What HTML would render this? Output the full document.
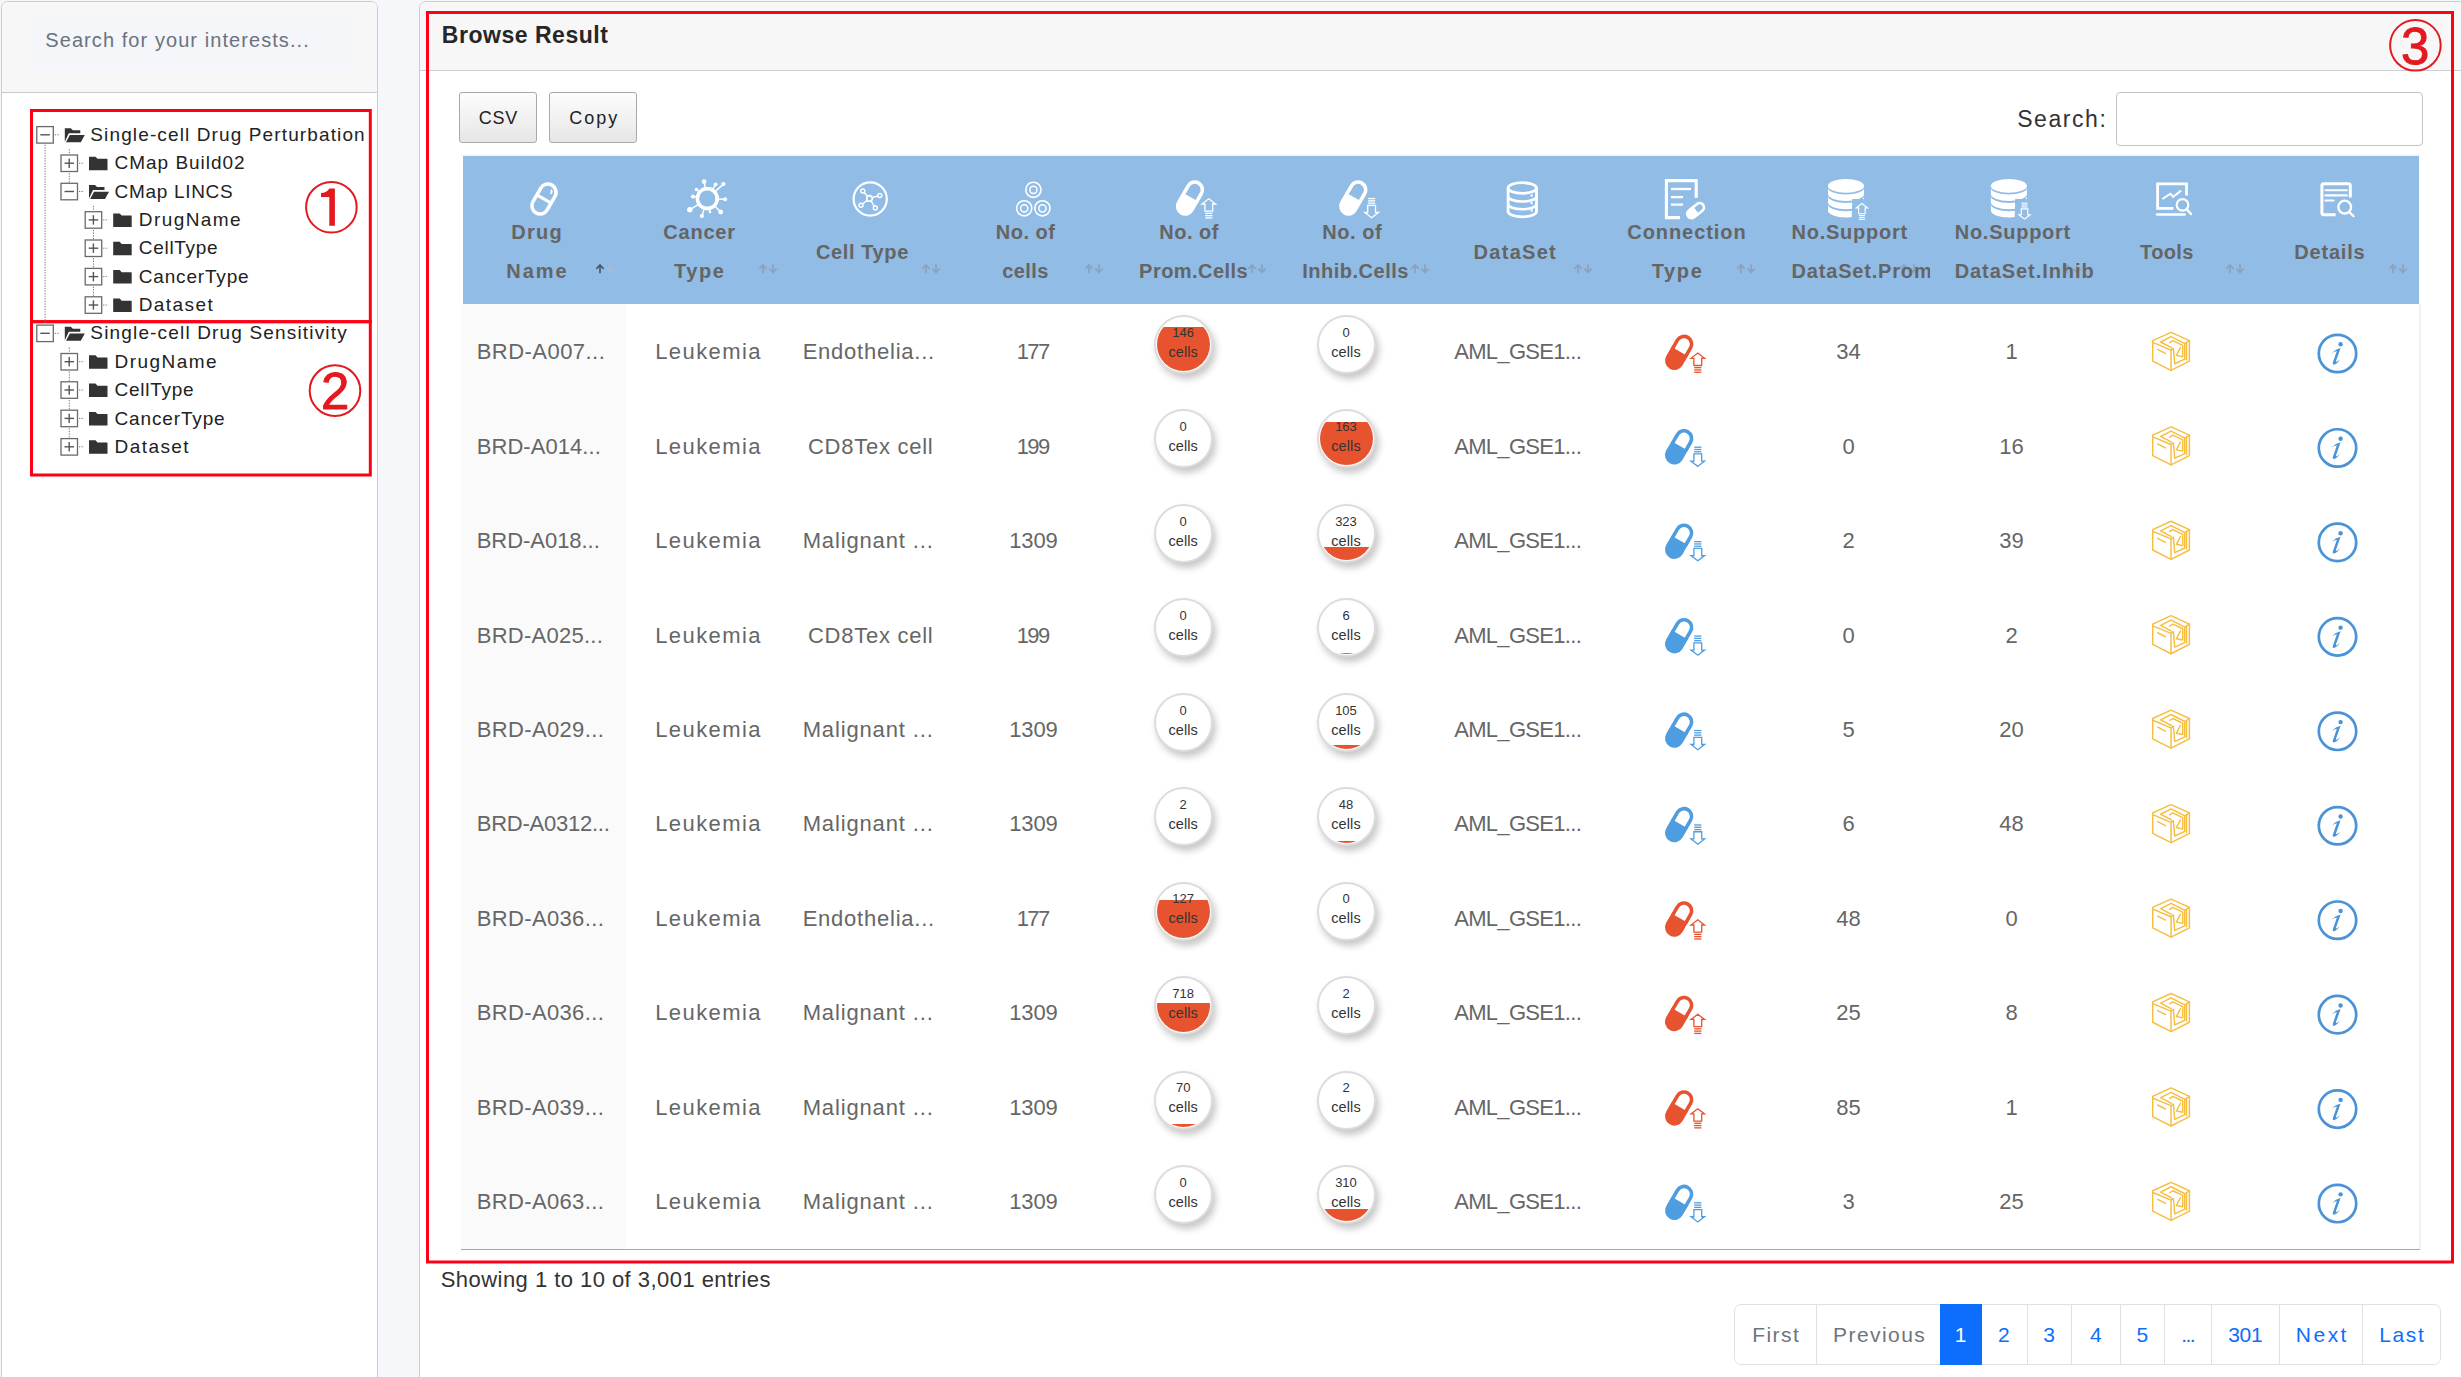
<!DOCTYPE html><html><head><meta charset="utf-8"><style>
html,body{margin:0;padding:0;}
body{width:2461px;height:1377px;overflow:hidden;position:relative;background:#f6f7fa;font-family:"Liberation Sans", sans-serif;}
.a{position:absolute;}
.t{position:absolute;white-space:pre;line-height:1;font-family:"Liberation Sans", sans-serif;}
.circ{position:absolute;width:55px;height:55px;border-radius:50%;border:2px solid #dcdcdc;background:#fff;box-shadow:3px 5px 7px rgba(0,0,0,0.22);}
.inner{position:absolute;left:1px;top:1px;width:53px;height:53px;border-radius:50%;overflow:hidden;}
.fill{position:absolute;left:0;right:0;bottom:0;background:#e8532f;}
</style></head><body>

<div class="a" style="left:1px;top:1px;width:375px;height:1420px;border:1px solid #c9ccd0;border-radius:7px;background:#fff;overflow:hidden"><div class="a" style="left:0;top:0;right:0;height:90px;background:#f7f7f7;border-bottom:1px solid #c9cccf"></div><div class="a" style="left:29px;top:12.5px;width:324px;height:54px;background:#f4f6f9;border-radius:5px"></div></div>
<div class="a" style="left:419px;top:1px;width:2045px;height:1420px;border:1px solid #c9ccd0;border-radius:7px;background:#fff;overflow:hidden"><div class="a" style="left:0;top:0;right:0;height:68px;background:#f7f7f7;border-bottom:1px solid #cfcfcf"></div></div>
<div class="a" style="left:459px;top:92px;width:76px;height:49px;border:1px solid #a9a9a9;border-radius:3px;background:linear-gradient(#fdfdfd,#e6e6e6)"></div>
<div class="a" style="left:549px;top:92px;width:86px;height:49px;border:1px solid #a9a9a9;border-radius:3px;background:linear-gradient(#fdfdfd,#e6e6e6)"></div>
<div class="a" style="left:2116px;top:92px;width:305px;height:52px;border:1px solid #c4c4c4;border-radius:4px;background:#fff"></div>
<div class="a" style="left:461px;top:154px;width:1960px;height:2px;background:#f6f7f8"></div>
<div class="a" style="left:463px;top:156px;width:1956px;height:148px;background:#91bce6"></div>
<div class="a" style="left:461px;top:304px;width:165px;height:945px;background:#fafafa"></div>
<div class="a" style="left:2419px;top:304px;width:2px;height:945px;background:#f1f2f3"></div>
<div class="a" style="left:461px;top:1248.5px;width:1959px;height:1.6px;background:#a8a8a8"></div>
<div class="a" style="left:1734px;top:1304px;width:705px;height:59px;border:1px solid #dee2e6;border-radius:7px;background:#fff"></div>
<div class="a" style="left:1815.5px;top:1305px;width:1px;height:59px;background:#dee2e6"></div>
<div class="a" style="left:2026.5px;top:1305px;width:1px;height:59px;background:#dee2e6"></div>
<div class="a" style="left:2071.4px;top:1305px;width:1px;height:59px;background:#dee2e6"></div>
<div class="a" style="left:2119.6px;top:1305px;width:1px;height:59px;background:#dee2e6"></div>
<div class="a" style="left:2164.4px;top:1305px;width:1px;height:59px;background:#dee2e6"></div>
<div class="a" style="left:2211.4px;top:1305px;width:1px;height:59px;background:#dee2e6"></div>
<div class="a" style="left:2278.6px;top:1305px;width:1px;height:59px;background:#dee2e6"></div>
<div class="a" style="left:2362.3px;top:1305px;width:1px;height:59px;background:#dee2e6"></div>
<div class="a" style="left:1940px;top:1304px;width:42px;height:61px;background:#0d6efd"></div>
<svg class="a" style="left:0;top:0;pointer-events:none" width="2461" height="1377" viewBox="0 0 2461 1377">
<path d="M600,273.2 L600,265.8 M596.4,268.8 L600,264.90000000000003 L603.6,268.8" fill="none" stroke="#4f5964" stroke-width="1.7"/>
<path d="M610,264.3 L610,271.7 M606.4,268.7 L610,272.59999999999997 L613.6,268.7" fill="none" stroke="#a4bcd6" stroke-width="1.7"/>
<path d="M763,273.2 L763,265.8 M759.4,268.8 L763,264.90000000000003 L766.6,268.8" fill="none" stroke="#8aa2bd" stroke-width="1.7"/>
<path d="M773,264.3 L773,271.7 M769.4,268.7 L773,272.59999999999997 L776.6,268.7" fill="none" stroke="#8aa2bd" stroke-width="1.7"/>
<path d="M926,273.2 L926,265.8 M922.4,268.8 L926,264.90000000000003 L929.6,268.8" fill="none" stroke="#8aa2bd" stroke-width="1.7"/>
<path d="M936,264.3 L936,271.7 M932.4,268.7 L936,272.59999999999997 L939.6,268.7" fill="none" stroke="#8aa2bd" stroke-width="1.7"/>
<path d="M1089,273.2 L1089,265.8 M1085.4,268.8 L1089,264.90000000000003 L1092.6,268.8" fill="none" stroke="#8aa2bd" stroke-width="1.7"/>
<path d="M1099,264.3 L1099,271.7 M1095.4,268.7 L1099,272.59999999999997 L1102.6,268.7" fill="none" stroke="#8aa2bd" stroke-width="1.7"/>
<path d="M1252,273.2 L1252,265.8 M1248.4,268.8 L1252,264.90000000000003 L1255.6,268.8" fill="none" stroke="#8aa2bd" stroke-width="1.7"/>
<path d="M1262,264.3 L1262,271.7 M1258.4,268.7 L1262,272.59999999999997 L1265.6,268.7" fill="none" stroke="#8aa2bd" stroke-width="1.7"/>
<path d="M1415,273.2 L1415,265.8 M1411.4,268.8 L1415,264.90000000000003 L1418.6,268.8" fill="none" stroke="#8aa2bd" stroke-width="1.7"/>
<path d="M1425,264.3 L1425,271.7 M1421.4,268.7 L1425,272.59999999999997 L1428.6,268.7" fill="none" stroke="#8aa2bd" stroke-width="1.7"/>
<path d="M1578,273.2 L1578,265.8 M1574.4,268.8 L1578,264.90000000000003 L1581.6,268.8" fill="none" stroke="#8aa2bd" stroke-width="1.7"/>
<path d="M1588,264.3 L1588,271.7 M1584.4,268.7 L1588,272.59999999999997 L1591.6,268.7" fill="none" stroke="#8aa2bd" stroke-width="1.7"/>
<path d="M1741,273.2 L1741,265.8 M1737.4,268.8 L1741,264.90000000000003 L1744.6,268.8" fill="none" stroke="#8aa2bd" stroke-width="1.7"/>
<path d="M1751,264.3 L1751,271.7 M1747.4,268.7 L1751,272.59999999999997 L1754.6,268.7" fill="none" stroke="#8aa2bd" stroke-width="1.7"/>
<path d="M1904,273.2 L1904,265.8 M1900.4,268.8 L1904,264.90000000000003 L1907.6,268.8" fill="none" stroke="#8aa2bd" stroke-width="1.7"/>
<path d="M1914,264.3 L1914,271.7 M1910.4,268.7 L1914,272.59999999999997 L1917.6,268.7" fill="none" stroke="#8aa2bd" stroke-width="1.7"/>
<path d="M2067,273.2 L2067,265.8 M2063.4,268.8 L2067,264.90000000000003 L2070.6,268.8" fill="none" stroke="#8aa2bd" stroke-width="1.7"/>
<path d="M2077,264.3 L2077,271.7 M2073.4,268.7 L2077,272.59999999999997 L2080.6,268.7" fill="none" stroke="#8aa2bd" stroke-width="1.7"/>
<path d="M2230,273.2 L2230,265.8 M2226.4,268.8 L2230,264.90000000000003 L2233.6,268.8" fill="none" stroke="#8aa2bd" stroke-width="1.7"/>
<path d="M2240,264.3 L2240,271.7 M2236.4,268.7 L2240,272.59999999999997 L2243.6,268.7" fill="none" stroke="#8aa2bd" stroke-width="1.7"/>
<path d="M2393,273.2 L2393,265.8 M2389.4,268.8 L2393,264.90000000000003 L2396.6,268.8" fill="none" stroke="#8aa2bd" stroke-width="1.7"/>
<path d="M2403,264.3 L2403,271.7 M2399.4,268.7 L2403,272.59999999999997 L2406.6,268.7" fill="none" stroke="#8aa2bd" stroke-width="1.7"/>
</svg>
<div class="t" style="left:45.30px;top:30.10px;font-size:20px;font-weight:400;color:#6b7280;letter-spacing:1.069px;">Search for your interests...</div>
<div class="t" style="left:90.33px;top:124.95px;font-size:19px;font-weight:400;color:#222;letter-spacing:1.122px;">Single-cell Drug Perturbation</div>
<div class="t" style="left:114.53px;top:153.31px;font-size:19px;font-weight:400;color:#222;letter-spacing:0.981px;">CMap Build02</div>
<div class="t" style="left:114.53px;top:181.67px;font-size:19px;font-weight:400;color:#222;letter-spacing:0.690px;">CMap LINCS</div>
<div class="t" style="left:138.74px;top:210.03px;font-size:19px;font-weight:400;color:#222;letter-spacing:1.436px;">DrugName</div>
<div class="t" style="left:138.74px;top:238.39px;font-size:19px;font-weight:400;color:#222;letter-spacing:0.715px;">CellType</div>
<div class="t" style="left:138.74px;top:266.75px;font-size:19px;font-weight:400;color:#222;letter-spacing:0.831px;">CancerType</div>
<div class="t" style="left:138.74px;top:295.11px;font-size:19px;font-weight:400;color:#222;letter-spacing:1.408px;">Dataset</div>
<div class="t" style="left:90.33px;top:323.47px;font-size:19px;font-weight:400;color:#222;letter-spacing:1.163px;">Single-cell Drug Sensitivity</div>
<div class="t" style="left:114.53px;top:351.83px;font-size:19px;font-weight:400;color:#222;letter-spacing:1.465px;">DrugName</div>
<div class="t" style="left:114.53px;top:380.19px;font-size:19px;font-weight:400;color:#222;letter-spacing:0.744px;">CellType</div>
<div class="t" style="left:114.53px;top:408.55px;font-size:19px;font-weight:400;color:#222;letter-spacing:0.853px;">CancerType</div>
<div class="t" style="left:114.53px;top:436.91px;font-size:19px;font-weight:400;color:#222;letter-spacing:1.441px;">Dataset</div>
<div class="t" style="left:441.80px;top:24.05px;font-size:23px;font-weight:700;color:#262626;letter-spacing:0.529px;">Browse Result</div>
<div class="t" style="left:478.67px;top:108.50px;font-size:18px;font-weight:400;color:#222;letter-spacing:0.822px;">CSV</div>
<div class="t" style="left:569.37px;top:108.50px;font-size:18px;font-weight:400;color:#222;letter-spacing:1.943px;">Copy</div>
<div class="t" style="left:2017.19px;top:107.65px;font-size:23px;font-weight:400;color:#333;letter-spacing:1.557px;">Search:</div>
<div class="t" style="left:511.30px;top:222.00px;font-size:20px;font-weight:700;color:#656565;letter-spacing:1.243px;">Drug</div>
<div class="t" style="left:506.30px;top:261.00px;font-size:20px;font-weight:700;color:#656565;letter-spacing:1.972px;">Name</div>
<div class="t" style="left:663.30px;top:222.00px;font-size:20px;font-weight:700;color:#656565;letter-spacing:0.777px;">Cancer</div>
<div class="t" style="left:674.00px;top:261.00px;font-size:20px;font-weight:700;color:#656565;letter-spacing:1.599px;">Type</div>
<div class="t" style="left:816.00px;top:242.00px;font-size:20px;font-weight:700;color:#656565;letter-spacing:0.608px;">Cell Type</div>
<div class="t" style="left:995.70px;top:222.00px;font-size:20px;font-weight:700;color:#656565;letter-spacing:0.529px;">No. of</div>
<div class="t" style="left:1002.20px;top:261.00px;font-size:20px;font-weight:700;color:#656565;letter-spacing:0.454px;">cells</div>
<div class="t" style="left:1159.30px;top:222.00px;font-size:20px;font-weight:700;color:#656565;letter-spacing:0.509px;">No. of</div>
<div class="t" style="left:1139.10px;top:261.00px;font-size:20px;font-weight:700;color:#656565;letter-spacing:0.457px;">Prom.Cells</div>
<div class="t" style="left:1322.30px;top:222.00px;font-size:20px;font-weight:700;color:#656565;letter-spacing:0.549px;">No. of</div>
<div class="t" style="left:1302.30px;top:261.00px;font-size:20px;font-weight:700;color:#656565;letter-spacing:0.498px;">Inhib.Cells</div>
<div class="t" style="left:1473.60px;top:242.00px;font-size:20px;font-weight:700;color:#656565;letter-spacing:1.269px;">DataSet</div>
<div class="t" style="left:1627.30px;top:222.00px;font-size:20px;font-weight:700;color:#656565;letter-spacing:0.933px;">Connection</div>
<div class="t" style="left:1651.70px;top:261.00px;font-size:20px;font-weight:700;color:#656565;letter-spacing:1.666px;">Type</div>
<div class="t" style="left:1791.50px;top:222.00px;font-size:20px;font-weight:700;color:#656565;letter-spacing:0.747px;">No.Support</div>
<div class="t" style="left:1791.50px;top:261.00px;font-size:20px;font-weight:700;color:#656565;letter-spacing:0.822px;width:138.5px;overflow:hidden;">DataSet.Prom</div>
<div class="t" style="left:1954.70px;top:222.00px;font-size:20px;font-weight:700;color:#656565;letter-spacing:0.747px;">No.Support</div>
<div class="t" style="left:1954.70px;top:261.00px;font-size:20px;font-weight:700;color:#656565;letter-spacing:0.934px;">DataSet.Inhib</div>
<div class="t" style="left:2140.10px;top:242.00px;font-size:20px;font-weight:700;color:#656565;letter-spacing:0.360px;">Tools</div>
<div class="t" style="left:2294.30px;top:242.00px;font-size:20px;font-weight:700;color:#656565;letter-spacing:0.801px;">Details</div>
<div class="t" style="left:476.73px;top:341.30px;font-size:22px;font-weight:400;color:#666;letter-spacing:0.454px;">BRD-A007...</div>
<div class="t" style="left:655.23px;top:341.30px;font-size:22px;font-weight:400;color:#666;letter-spacing:1.407px;">Leukemia</div>
<div class="t" style="left:802.63px;top:341.30px;font-size:22px;font-weight:400;color:#666;letter-spacing:0.769px;">Endothelia...</div>
<div class="t" style="left:1016.68px;top:341.30px;font-size:22px;font-weight:400;color:#666;letter-spacing:-1.539px;">177</div>
<div class="t" style="left:1454.23px;top:341.30px;font-size:22px;font-weight:400;color:#666;letter-spacing:-0.698px;">AML_GSE1...</div>
<div class="t" style="left:1836.26px;top:341.30px;font-size:22px;font-weight:400;color:#666;letter-spacing:0.000px;">34</div>
<div class="t" style="left:2005.38px;top:341.30px;font-size:22px;font-weight:400;color:#666;letter-spacing:0.000px;">1</div>
<div class="t" style="left:476.73px;top:435.72px;font-size:22px;font-weight:400;color:#666;letter-spacing:0.054px;">BRD-A014...</div>
<div class="t" style="left:655.23px;top:435.72px;font-size:22px;font-weight:400;color:#666;letter-spacing:1.407px;">Leukemia</div>
<div class="t" style="left:807.93px;top:435.72px;font-size:22px;font-weight:400;color:#666;letter-spacing:0.746px;">CD8Tex cell</div>
<div class="t" style="left:1016.68px;top:435.72px;font-size:22px;font-weight:400;color:#666;letter-spacing:-1.539px;">199</div>
<div class="t" style="left:1454.23px;top:435.72px;font-size:22px;font-weight:400;color:#666;letter-spacing:-0.698px;">AML_GSE1...</div>
<div class="t" style="left:1842.38px;top:435.72px;font-size:22px;font-weight:400;color:#666;letter-spacing:0.000px;">0</div>
<div class="t" style="left:1999.26px;top:435.72px;font-size:22px;font-weight:400;color:#666;letter-spacing:0.000px;">16</div>
<div class="t" style="left:476.73px;top:530.14px;font-size:22px;font-weight:400;color:#666;letter-spacing:-0.046px;">BRD-A018...</div>
<div class="t" style="left:655.23px;top:530.14px;font-size:22px;font-weight:400;color:#666;letter-spacing:1.407px;">Leukemia</div>
<div class="t" style="left:802.63px;top:530.14px;font-size:22px;font-weight:400;color:#666;letter-spacing:0.858px;">Malignant ...</div>
<div class="t" style="left:1009.28px;top:530.14px;font-size:22px;font-weight:400;color:#666;letter-spacing:-0.171px;">1309</div>
<div class="t" style="left:1454.23px;top:530.14px;font-size:22px;font-weight:400;color:#666;letter-spacing:-0.698px;">AML_GSE1...</div>
<div class="t" style="left:1842.38px;top:530.14px;font-size:22px;font-weight:400;color:#666;letter-spacing:0.000px;">2</div>
<div class="t" style="left:1999.26px;top:530.14px;font-size:22px;font-weight:400;color:#666;letter-spacing:0.000px;">39</div>
<div class="t" style="left:476.73px;top:624.56px;font-size:22px;font-weight:400;color:#666;letter-spacing:0.254px;">BRD-A025...</div>
<div class="t" style="left:655.23px;top:624.56px;font-size:22px;font-weight:400;color:#666;letter-spacing:1.407px;">Leukemia</div>
<div class="t" style="left:807.93px;top:624.56px;font-size:22px;font-weight:400;color:#666;letter-spacing:0.746px;">CD8Tex cell</div>
<div class="t" style="left:1016.68px;top:624.56px;font-size:22px;font-weight:400;color:#666;letter-spacing:-1.539px;">199</div>
<div class="t" style="left:1454.23px;top:624.56px;font-size:22px;font-weight:400;color:#666;letter-spacing:-0.698px;">AML_GSE1...</div>
<div class="t" style="left:1842.38px;top:624.56px;font-size:22px;font-weight:400;color:#666;letter-spacing:0.000px;">0</div>
<div class="t" style="left:2005.38px;top:624.56px;font-size:22px;font-weight:400;color:#666;letter-spacing:0.000px;">2</div>
<div class="t" style="left:476.73px;top:718.98px;font-size:22px;font-weight:400;color:#666;letter-spacing:0.354px;">BRD-A029...</div>
<div class="t" style="left:655.23px;top:718.98px;font-size:22px;font-weight:400;color:#666;letter-spacing:1.407px;">Leukemia</div>
<div class="t" style="left:802.63px;top:718.98px;font-size:22px;font-weight:400;color:#666;letter-spacing:0.858px;">Malignant ...</div>
<div class="t" style="left:1009.28px;top:718.98px;font-size:22px;font-weight:400;color:#666;letter-spacing:-0.171px;">1309</div>
<div class="t" style="left:1454.23px;top:718.98px;font-size:22px;font-weight:400;color:#666;letter-spacing:-0.698px;">AML_GSE1...</div>
<div class="t" style="left:1842.38px;top:718.98px;font-size:22px;font-weight:400;color:#666;letter-spacing:0.000px;">5</div>
<div class="t" style="left:1999.26px;top:718.98px;font-size:22px;font-weight:400;color:#666;letter-spacing:0.000px;">20</div>
<div class="t" style="left:476.73px;top:813.40px;font-size:22px;font-weight:400;color:#666;letter-spacing:-0.245px;">BRD-A0312...</div>
<div class="t" style="left:655.23px;top:813.40px;font-size:22px;font-weight:400;color:#666;letter-spacing:1.407px;">Leukemia</div>
<div class="t" style="left:802.63px;top:813.40px;font-size:22px;font-weight:400;color:#666;letter-spacing:0.858px;">Malignant ...</div>
<div class="t" style="left:1009.28px;top:813.40px;font-size:22px;font-weight:400;color:#666;letter-spacing:-0.171px;">1309</div>
<div class="t" style="left:1454.23px;top:813.40px;font-size:22px;font-weight:400;color:#666;letter-spacing:-0.698px;">AML_GSE1...</div>
<div class="t" style="left:1842.38px;top:813.40px;font-size:22px;font-weight:400;color:#666;letter-spacing:0.000px;">6</div>
<div class="t" style="left:1999.26px;top:813.40px;font-size:22px;font-weight:400;color:#666;letter-spacing:0.000px;">48</div>
<div class="t" style="left:476.73px;top:907.82px;font-size:22px;font-weight:400;color:#666;letter-spacing:0.354px;">BRD-A036...</div>
<div class="t" style="left:655.23px;top:907.82px;font-size:22px;font-weight:400;color:#666;letter-spacing:1.407px;">Leukemia</div>
<div class="t" style="left:802.63px;top:907.82px;font-size:22px;font-weight:400;color:#666;letter-spacing:0.769px;">Endothelia...</div>
<div class="t" style="left:1016.68px;top:907.82px;font-size:22px;font-weight:400;color:#666;letter-spacing:-1.539px;">177</div>
<div class="t" style="left:1454.23px;top:907.82px;font-size:22px;font-weight:400;color:#666;letter-spacing:-0.698px;">AML_GSE1...</div>
<div class="t" style="left:1836.26px;top:907.82px;font-size:22px;font-weight:400;color:#666;letter-spacing:0.000px;">48</div>
<div class="t" style="left:2005.38px;top:907.82px;font-size:22px;font-weight:400;color:#666;letter-spacing:0.000px;">0</div>
<div class="t" style="left:476.73px;top:1002.24px;font-size:22px;font-weight:400;color:#666;letter-spacing:0.354px;">BRD-A036...</div>
<div class="t" style="left:655.23px;top:1002.24px;font-size:22px;font-weight:400;color:#666;letter-spacing:1.407px;">Leukemia</div>
<div class="t" style="left:802.63px;top:1002.24px;font-size:22px;font-weight:400;color:#666;letter-spacing:0.858px;">Malignant ...</div>
<div class="t" style="left:1009.28px;top:1002.24px;font-size:22px;font-weight:400;color:#666;letter-spacing:-0.171px;">1309</div>
<div class="t" style="left:1454.23px;top:1002.24px;font-size:22px;font-weight:400;color:#666;letter-spacing:-0.698px;">AML_GSE1...</div>
<div class="t" style="left:1836.26px;top:1002.24px;font-size:22px;font-weight:400;color:#666;letter-spacing:0.000px;">25</div>
<div class="t" style="left:2005.38px;top:1002.24px;font-size:22px;font-weight:400;color:#666;letter-spacing:0.000px;">8</div>
<div class="t" style="left:476.73px;top:1096.66px;font-size:22px;font-weight:400;color:#666;letter-spacing:0.354px;">BRD-A039...</div>
<div class="t" style="left:655.23px;top:1096.66px;font-size:22px;font-weight:400;color:#666;letter-spacing:1.407px;">Leukemia</div>
<div class="t" style="left:802.63px;top:1096.66px;font-size:22px;font-weight:400;color:#666;letter-spacing:0.858px;">Malignant ...</div>
<div class="t" style="left:1009.28px;top:1096.66px;font-size:22px;font-weight:400;color:#666;letter-spacing:-0.171px;">1309</div>
<div class="t" style="left:1454.23px;top:1096.66px;font-size:22px;font-weight:400;color:#666;letter-spacing:-0.698px;">AML_GSE1...</div>
<div class="t" style="left:1836.26px;top:1096.66px;font-size:22px;font-weight:400;color:#666;letter-spacing:0.000px;">85</div>
<div class="t" style="left:2005.38px;top:1096.66px;font-size:22px;font-weight:400;color:#666;letter-spacing:0.000px;">1</div>
<div class="t" style="left:476.73px;top:1191.08px;font-size:22px;font-weight:400;color:#666;letter-spacing:0.354px;">BRD-A063...</div>
<div class="t" style="left:655.23px;top:1191.08px;font-size:22px;font-weight:400;color:#666;letter-spacing:1.407px;">Leukemia</div>
<div class="t" style="left:802.63px;top:1191.08px;font-size:22px;font-weight:400;color:#666;letter-spacing:0.858px;">Malignant ...</div>
<div class="t" style="left:1009.28px;top:1191.08px;font-size:22px;font-weight:400;color:#666;letter-spacing:-0.171px;">1309</div>
<div class="t" style="left:1454.23px;top:1191.08px;font-size:22px;font-weight:400;color:#666;letter-spacing:-0.698px;">AML_GSE1...</div>
<div class="t" style="left:1842.38px;top:1191.08px;font-size:22px;font-weight:400;color:#666;letter-spacing:0.000px;">3</div>
<div class="t" style="left:1999.26px;top:1191.08px;font-size:22px;font-weight:400;color:#666;letter-spacing:0.000px;">25</div>
<div class="t" style="left:440.73px;top:1268.90px;font-size:22px;font-weight:400;color:#333;letter-spacing:0.457px;">Showing 1 to 10 of 3,001 entries</div>
<div class="t" style="left:1752.27px;top:1324.15px;font-size:21px;font-weight:400;color:#6c757d;letter-spacing:1.410px;">First</div>
<div class="t" style="left:1833.07px;top:1324.15px;font-size:21px;font-weight:400;color:#6c757d;letter-spacing:1.424px;">Previous</div>
<div class="t" style="left:1954.66px;top:1324.15px;font-size:21px;font-weight:400;color:#fff;letter-spacing:0.000px;">1</div>
<div class="t" style="left:1997.96px;top:1324.15px;font-size:21px;font-weight:400;color:#0d6efd;letter-spacing:0.000px;">2</div>
<div class="t" style="left:2043.31px;top:1324.15px;font-size:21px;font-weight:400;color:#0d6efd;letter-spacing:0.000px;">3</div>
<div class="t" style="left:2090.11px;top:1324.15px;font-size:21px;font-weight:400;color:#0d6efd;letter-spacing:0.000px;">4</div>
<div class="t" style="left:2136.46px;top:1324.15px;font-size:21px;font-weight:400;color:#0d6efd;letter-spacing:0.000px;">5</div>
<div class="t" style="left:2181.26px;top:1324.15px;font-size:21px;font-weight:400;color:#0d6efd;letter-spacing:-1.573px;">...</div>
<div class="t" style="left:2228.16px;top:1324.15px;font-size:21px;font-weight:400;color:#0d6efd;letter-spacing:-0.238px;">301</div>
<div class="t" style="left:2295.86px;top:1324.15px;font-size:21px;font-weight:400;color:#0d6efd;letter-spacing:2.461px;">Next</div>
<div class="t" style="left:2379.26px;top:1324.15px;font-size:21px;font-weight:400;color:#0d6efd;letter-spacing:1.589px;">Last</div>
<div class="circ" style="left:1153.7px;top:315.0px"><div class="inner"><div class="fill" style="height:43.7px"></div></div></div>
<div class="t" style="left:1143.2px;width:80px;text-align:center;top:325.6px;font-size:13px;color:#333;z-index:6">146</div>
<div class="t" style="left:1143.2px;width:80px;text-align:center;top:344.7px;font-size:14.5px;color:#333;letter-spacing:0.1px;z-index:6">cells</div>
<div class="circ" style="left:1316.5px;top:315.0px"><div class="inner"><div class="fill" style="height:0.0px"></div></div></div>
<div class="t" style="left:1306.0px;width:80px;text-align:center;top:325.6px;font-size:13px;color:#333;z-index:6">0</div>
<div class="t" style="left:1306.0px;width:80px;text-align:center;top:344.7px;font-size:14.5px;color:#333;letter-spacing:0.1px;z-index:6">cells</div>
<div class="circ" style="left:1153.7px;top:409.4px"><div class="inner"><div class="fill" style="height:0.0px"></div></div></div>
<div class="t" style="left:1143.2px;width:80px;text-align:center;top:420.1px;font-size:13px;color:#333;z-index:6">0</div>
<div class="t" style="left:1143.2px;width:80px;text-align:center;top:439.1px;font-size:14.5px;color:#333;letter-spacing:0.1px;z-index:6">cells</div>
<div class="circ" style="left:1316.5px;top:409.4px"><div class="inner"><div class="fill" style="height:43.4px"></div></div></div>
<div class="t" style="left:1306.0px;width:80px;text-align:center;top:420.1px;font-size:13px;color:#333;z-index:6">163</div>
<div class="t" style="left:1306.0px;width:80px;text-align:center;top:439.1px;font-size:14.5px;color:#333;letter-spacing:0.1px;z-index:6">cells</div>
<div class="circ" style="left:1153.7px;top:503.9px"><div class="inner"><div class="fill" style="height:0.0px"></div></div></div>
<div class="t" style="left:1143.2px;width:80px;text-align:center;top:514.6px;font-size:13px;color:#333;z-index:6">0</div>
<div class="t" style="left:1143.2px;width:80px;text-align:center;top:533.6px;font-size:14.5px;color:#333;letter-spacing:0.1px;z-index:6">cells</div>
<div class="circ" style="left:1316.5px;top:503.9px"><div class="inner"><div class="fill" style="height:13.1px"></div></div></div>
<div class="t" style="left:1306.0px;width:80px;text-align:center;top:514.6px;font-size:13px;color:#333;z-index:6">323</div>
<div class="t" style="left:1306.0px;width:80px;text-align:center;top:533.6px;font-size:14.5px;color:#333;letter-spacing:0.1px;z-index:6">cells</div>
<div class="circ" style="left:1153.7px;top:598.4px"><div class="inner"><div class="fill" style="height:0.0px"></div></div></div>
<div class="t" style="left:1143.2px;width:80px;text-align:center;top:609.0px;font-size:13px;color:#333;z-index:6">0</div>
<div class="t" style="left:1143.2px;width:80px;text-align:center;top:628.0px;font-size:14.5px;color:#333;letter-spacing:0.1px;z-index:6">cells</div>
<div class="circ" style="left:1316.5px;top:598.4px"><div class="inner"><div class="fill" style="height:1.6px"></div></div></div>
<div class="t" style="left:1306.0px;width:80px;text-align:center;top:609.0px;font-size:13px;color:#333;z-index:6">6</div>
<div class="t" style="left:1306.0px;width:80px;text-align:center;top:628.0px;font-size:14.5px;color:#333;letter-spacing:0.1px;z-index:6">cells</div>
<div class="circ" style="left:1153.7px;top:692.8px"><div class="inner"><div class="fill" style="height:0.0px"></div></div></div>
<div class="t" style="left:1143.2px;width:80px;text-align:center;top:703.5px;font-size:13px;color:#333;z-index:6">0</div>
<div class="t" style="left:1143.2px;width:80px;text-align:center;top:722.5px;font-size:14.5px;color:#333;letter-spacing:0.1px;z-index:6">cells</div>
<div class="circ" style="left:1316.5px;top:692.8px"><div class="inner"><div class="fill" style="height:4.3px"></div></div></div>
<div class="t" style="left:1306.0px;width:80px;text-align:center;top:703.5px;font-size:13px;color:#333;z-index:6">105</div>
<div class="t" style="left:1306.0px;width:80px;text-align:center;top:722.5px;font-size:14.5px;color:#333;letter-spacing:0.1px;z-index:6">cells</div>
<div class="circ" style="left:1153.7px;top:787.2px"><div class="inner"><div class="fill" style="height:0.1px"></div></div></div>
<div class="t" style="left:1143.2px;width:80px;text-align:center;top:797.9px;font-size:13px;color:#333;z-index:6">2</div>
<div class="t" style="left:1143.2px;width:80px;text-align:center;top:816.9px;font-size:14.5px;color:#333;letter-spacing:0.1px;z-index:6">cells</div>
<div class="circ" style="left:1316.5px;top:787.2px"><div class="inner"><div class="fill" style="height:1.9px"></div></div></div>
<div class="t" style="left:1306.0px;width:80px;text-align:center;top:797.9px;font-size:13px;color:#333;z-index:6">48</div>
<div class="t" style="left:1306.0px;width:80px;text-align:center;top:816.9px;font-size:14.5px;color:#333;letter-spacing:0.1px;z-index:6">cells</div>
<div class="circ" style="left:1153.7px;top:881.7px"><div class="inner"><div class="fill" style="height:38.0px"></div></div></div>
<div class="t" style="left:1143.2px;width:80px;text-align:center;top:892.4px;font-size:13px;color:#333;z-index:6">127</div>
<div class="t" style="left:1143.2px;width:80px;text-align:center;top:911.4px;font-size:14.5px;color:#333;letter-spacing:0.1px;z-index:6">cells</div>
<div class="circ" style="left:1316.5px;top:881.7px"><div class="inner"><div class="fill" style="height:0.0px"></div></div></div>
<div class="t" style="left:1306.0px;width:80px;text-align:center;top:892.4px;font-size:13px;color:#333;z-index:6">0</div>
<div class="t" style="left:1306.0px;width:80px;text-align:center;top:911.4px;font-size:14.5px;color:#333;letter-spacing:0.1px;z-index:6">cells</div>
<div class="circ" style="left:1153.7px;top:976.1px"><div class="inner"><div class="fill" style="height:29.1px"></div></div></div>
<div class="t" style="left:1143.2px;width:80px;text-align:center;top:986.8px;font-size:13px;color:#333;z-index:6">718</div>
<div class="t" style="left:1143.2px;width:80px;text-align:center;top:1005.8px;font-size:14.5px;color:#333;letter-spacing:0.1px;z-index:6">cells</div>
<div class="circ" style="left:1316.5px;top:976.1px"><div class="inner"><div class="fill" style="height:0.1px"></div></div></div>
<div class="t" style="left:1306.0px;width:80px;text-align:center;top:986.8px;font-size:13px;color:#333;z-index:6">2</div>
<div class="t" style="left:1306.0px;width:80px;text-align:center;top:1005.8px;font-size:14.5px;color:#333;letter-spacing:0.1px;z-index:6">cells</div>
<div class="circ" style="left:1153.7px;top:1070.6px"><div class="inner"><div class="fill" style="height:2.8px"></div></div></div>
<div class="t" style="left:1143.2px;width:80px;text-align:center;top:1081.2px;font-size:13px;color:#333;z-index:6">70</div>
<div class="t" style="left:1143.2px;width:80px;text-align:center;top:1100.3px;font-size:14.5px;color:#333;letter-spacing:0.1px;z-index:6">cells</div>
<div class="circ" style="left:1316.5px;top:1070.6px"><div class="inner"><div class="fill" style="height:0.1px"></div></div></div>
<div class="t" style="left:1306.0px;width:80px;text-align:center;top:1081.2px;font-size:13px;color:#333;z-index:6">2</div>
<div class="t" style="left:1306.0px;width:80px;text-align:center;top:1100.3px;font-size:14.5px;color:#333;letter-spacing:0.1px;z-index:6">cells</div>
<div class="circ" style="left:1153.7px;top:1165.1px"><div class="inner"><div class="fill" style="height:0.0px"></div></div></div>
<div class="t" style="left:1143.2px;width:80px;text-align:center;top:1175.7px;font-size:13px;color:#333;z-index:6">0</div>
<div class="t" style="left:1143.2px;width:80px;text-align:center;top:1194.7px;font-size:14.5px;color:#333;letter-spacing:0.1px;z-index:6">cells</div>
<div class="circ" style="left:1316.5px;top:1165.1px"><div class="inner"><div class="fill" style="height:12.6px"></div></div></div>
<div class="t" style="left:1306.0px;width:80px;text-align:center;top:1175.7px;font-size:13px;color:#333;z-index:6">310</div>
<div class="t" style="left:1306.0px;width:80px;text-align:center;top:1194.7px;font-size:14.5px;color:#333;letter-spacing:0.1px;z-index:6">cells</div>
<svg class="a" style="left:0;top:0;z-index:5;pointer-events:none" width="2461" height="1377" viewBox="0 0 2461 1377">
<rect x="31.5" y="110.5" width="338.8" height="211.2" fill="none" stroke="#fd0016" stroke-width="3"/>
<rect x="31.5" y="321.7" width="338.8" height="153.3" fill="none" stroke="#fd0016" stroke-width="3"/>
<rect x="427.5" y="12.5" width="2025" height="1249.5" fill="none" stroke="#fd0016" stroke-width="3"/>
<circle cx="331.4" cy="207.2" r="25.3" fill="none" stroke="#e3191f" stroke-width="2"/>
<circle cx="335" cy="390.6" r="25.3" fill="none" stroke="#e3191f" stroke-width="2"/>
<circle cx="2415.4" cy="45.3" r="25.3" fill="none" stroke="#e3191f" stroke-width="2"/>
<path d="M321,193.0 Q326.8,192.8 329.3,188.4 L334.9,188.4 L334.9,225.7 L329.3,225.7 L329.3,197.0 L321,197.0 Z" fill="#e3191f"/>
<g font-family="Liberation Sans" fill="#e3191f" stroke="#e3191f" stroke-width="0.9" font-size="51" text-anchor="middle">
<text x="335.3" y="408.6">2</text>
<text x="2415.2" y="64.3">3</text>
</g>
<rect x="36.8" y="126.6" width="16.5" height="16.5" fill="#fff" stroke="#6a6a6a" stroke-width="1.3"/>
<line x1="40.3" y1="134.8" x2="49.8" y2="134.8" stroke="#555" stroke-width="1.4"/>
<line x1="54.8" y1="134.8" x2="59.8" y2="134.8" stroke="#777" stroke-width="1" stroke-dasharray="1.2,1.2"/>
<path d="M64.8,141.79999999999998 L64.8,128.29999999999998 L70.8,128.29999999999998 L72.8,130.29999999999998 L80.3,130.29999999999998 L80.3,133.29999999999998 L68.8,133.29999999999998 Z" fill="#333"/>
<path d="M66.0,142.29999999999998 L69.8,134.99999999999997 L84.8,134.99999999999997 L80.8,142.29999999999998 Z" fill="#333"/>
<rect x="61.0" y="155.0" width="16.5" height="16.5" fill="#fff" stroke="#6a6a6a" stroke-width="1.3"/>
<line x1="64.5" y1="163.2" x2="74.0" y2="163.2" stroke="#555" stroke-width="1.4"/>
<line x1="69.2" y1="158.5" x2="69.2" y2="167.9" stroke="#555" stroke-width="1.4"/>
<line x1="79.0" y1="163.2" x2="84.0" y2="163.2" stroke="#777" stroke-width="1" stroke-dasharray="1.2,1.2"/>
<path d="M89.0,156.65999999999997 L95.5,156.65999999999997 L97.5,158.85999999999996 L107.0,158.85999999999996 Q107.5,158.85999999999996 107.5,159.65999999999997 L107.5,170.15999999999997 L89.0,170.15999999999997 Z" fill="#333"/>
<rect x="61.0" y="183.3" width="16.5" height="16.5" fill="#fff" stroke="#6a6a6a" stroke-width="1.3"/>
<line x1="64.5" y1="191.5" x2="74.0" y2="191.5" stroke="#555" stroke-width="1.4"/>
<line x1="79.0" y1="191.5" x2="84.0" y2="191.5" stroke="#777" stroke-width="1" stroke-dasharray="1.2,1.2"/>
<path d="M89.0,198.51999999999998 L89.0,185.01999999999998 L95.0,185.01999999999998 L97.0,187.01999999999998 L104.5,187.01999999999998 L104.5,190.01999999999998 L93.0,190.01999999999998 Z" fill="#333"/>
<path d="M90.2,199.01999999999998 L94.0,191.71999999999997 L109.0,191.71999999999997 L105.0,199.01999999999998 Z" fill="#333"/>
<rect x="85.2" y="211.7" width="16.5" height="16.5" fill="#fff" stroke="#6a6a6a" stroke-width="1.3"/>
<line x1="88.7" y1="219.9" x2="98.2" y2="219.9" stroke="#555" stroke-width="1.4"/>
<line x1="93.4" y1="215.2" x2="93.4" y2="224.6" stroke="#555" stroke-width="1.4"/>
<line x1="103.2" y1="219.9" x2="108.2" y2="219.9" stroke="#777" stroke-width="1" stroke-dasharray="1.2,1.2"/>
<path d="M113.2,213.38 L119.7,213.38 L121.7,215.57999999999998 L131.2,215.57999999999998 Q131.7,215.57999999999998 131.7,216.38 L131.7,226.88 L113.2,226.88 Z" fill="#333"/>
<rect x="85.2" y="240.0" width="16.5" height="16.5" fill="#fff" stroke="#6a6a6a" stroke-width="1.3"/>
<line x1="88.7" y1="248.2" x2="98.2" y2="248.2" stroke="#555" stroke-width="1.4"/>
<line x1="93.4" y1="243.5" x2="93.4" y2="252.9" stroke="#555" stroke-width="1.4"/>
<line x1="103.2" y1="248.2" x2="108.2" y2="248.2" stroke="#777" stroke-width="1" stroke-dasharray="1.2,1.2"/>
<path d="M113.2,241.73999999999998 L119.7,241.73999999999998 L121.7,243.93999999999997 L131.2,243.93999999999997 Q131.7,243.93999999999997 131.7,244.73999999999998 L131.7,255.23999999999998 L113.2,255.23999999999998 Z" fill="#333"/>
<rect x="85.2" y="268.4" width="16.5" height="16.5" fill="#fff" stroke="#6a6a6a" stroke-width="1.3"/>
<line x1="88.7" y1="276.6" x2="98.2" y2="276.6" stroke="#555" stroke-width="1.4"/>
<line x1="93.4" y1="271.9" x2="93.4" y2="281.3" stroke="#555" stroke-width="1.4"/>
<line x1="103.2" y1="276.6" x2="108.2" y2="276.6" stroke="#777" stroke-width="1" stroke-dasharray="1.2,1.2"/>
<path d="M113.2,270.09999999999997 L119.7,270.09999999999997 L121.7,272.29999999999995 L131.2,272.29999999999995 Q131.7,272.29999999999995 131.7,273.09999999999997 L131.7,283.59999999999997 L113.2,283.59999999999997 Z" fill="#333"/>
<rect x="85.2" y="296.8" width="16.5" height="16.5" fill="#fff" stroke="#6a6a6a" stroke-width="1.3"/>
<line x1="88.7" y1="305.0" x2="98.2" y2="305.0" stroke="#555" stroke-width="1.4"/>
<line x1="93.4" y1="300.3" x2="93.4" y2="309.7" stroke="#555" stroke-width="1.4"/>
<line x1="103.2" y1="305.0" x2="108.2" y2="305.0" stroke="#777" stroke-width="1" stroke-dasharray="1.2,1.2"/>
<path d="M113.2,298.46 L119.7,298.46 L121.7,300.65999999999997 L131.2,300.65999999999997 Q131.7,300.65999999999997 131.7,301.46 L131.7,311.96 L113.2,311.96 Z" fill="#333"/>
<rect x="36.8" y="325.1" width="16.5" height="16.5" fill="#fff" stroke="#6a6a6a" stroke-width="1.3"/>
<line x1="40.3" y1="333.3" x2="49.8" y2="333.3" stroke="#555" stroke-width="1.4"/>
<line x1="54.8" y1="333.3" x2="59.8" y2="333.3" stroke="#777" stroke-width="1" stroke-dasharray="1.2,1.2"/>
<path d="M64.8,340.32 L64.8,326.82 L70.8,326.82 L72.8,328.82 L80.3,328.82 L80.3,331.82 L68.8,331.82 Z" fill="#333"/>
<path d="M66.0,340.82 L69.8,333.52 L84.8,333.52 L80.8,340.82 Z" fill="#333"/>
<rect x="61.0" y="353.5" width="16.5" height="16.5" fill="#fff" stroke="#6a6a6a" stroke-width="1.3"/>
<line x1="64.5" y1="361.7" x2="74.0" y2="361.7" stroke="#555" stroke-width="1.4"/>
<line x1="69.2" y1="357.0" x2="69.2" y2="366.4" stroke="#555" stroke-width="1.4"/>
<line x1="79.0" y1="361.7" x2="84.0" y2="361.7" stroke="#777" stroke-width="1" stroke-dasharray="1.2,1.2"/>
<path d="M89.0,355.18 L95.5,355.18 L97.5,357.38 L107.0,357.38 Q107.5,357.38 107.5,358.18 L107.5,368.68 L89.0,368.68 Z" fill="#333"/>
<rect x="61.0" y="381.8" width="16.5" height="16.5" fill="#fff" stroke="#6a6a6a" stroke-width="1.3"/>
<line x1="64.5" y1="390.0" x2="74.0" y2="390.0" stroke="#555" stroke-width="1.4"/>
<line x1="69.2" y1="385.3" x2="69.2" y2="394.7" stroke="#555" stroke-width="1.4"/>
<line x1="79.0" y1="390.0" x2="84.0" y2="390.0" stroke="#777" stroke-width="1" stroke-dasharray="1.2,1.2"/>
<path d="M89.0,383.54 L95.5,383.54 L97.5,385.74 L107.0,385.74 Q107.5,385.74 107.5,386.54 L107.5,397.04 L89.0,397.04 Z" fill="#333"/>
<rect x="61.0" y="410.2" width="16.5" height="16.5" fill="#fff" stroke="#6a6a6a" stroke-width="1.3"/>
<line x1="64.5" y1="418.4" x2="74.0" y2="418.4" stroke="#555" stroke-width="1.4"/>
<line x1="69.2" y1="413.7" x2="69.2" y2="423.1" stroke="#555" stroke-width="1.4"/>
<line x1="79.0" y1="418.4" x2="84.0" y2="418.4" stroke="#777" stroke-width="1" stroke-dasharray="1.2,1.2"/>
<path d="M89.0,411.90000000000003 L95.5,411.90000000000003 L97.5,414.1 L107.0,414.1 Q107.5,414.1 107.5,414.90000000000003 L107.5,425.40000000000003 L89.0,425.40000000000003 Z" fill="#333"/>
<rect x="61.0" y="438.6" width="16.5" height="16.5" fill="#fff" stroke="#6a6a6a" stroke-width="1.3"/>
<line x1="64.5" y1="446.8" x2="74.0" y2="446.8" stroke="#555" stroke-width="1.4"/>
<line x1="69.2" y1="442.1" x2="69.2" y2="451.5" stroke="#555" stroke-width="1.4"/>
<line x1="79.0" y1="446.8" x2="84.0" y2="446.8" stroke="#777" stroke-width="1" stroke-dasharray="1.2,1.2"/>
<path d="M89.0,440.25999999999993 L95.5,440.25999999999993 L97.5,442.4599999999999 L107.0,442.4599999999999 Q107.5,442.4599999999999 107.5,443.25999999999993 L107.5,453.75999999999993 L89.0,453.75999999999993 Z" fill="#333"/>
<line x1="45.1" y1="144.79999999999998" x2="45.1" y2="324.32" stroke="#777" stroke-width="1" stroke-dasharray="1.3,1.3"/>
<line x1="69.3" y1="149.15999999999997" x2="69.3" y2="154.15999999999997" stroke="#777" stroke-width="1" stroke-dasharray="1.3,1.3"/>
<line x1="69.3" y1="173.15999999999997" x2="69.3" y2="182.51999999999998" stroke="#777" stroke-width="1" stroke-dasharray="1.3,1.3"/>
<line x1="93.5" y1="205.88" x2="93.5" y2="210.88" stroke="#777" stroke-width="1" stroke-dasharray="1.3,1.3"/>
<line x1="93.5" y1="229.88" x2="93.5" y2="239.23999999999998" stroke="#777" stroke-width="1" stroke-dasharray="1.3,1.3"/>
<line x1="93.5" y1="258.24" x2="93.5" y2="267.59999999999997" stroke="#777" stroke-width="1" stroke-dasharray="1.3,1.3"/>
<line x1="93.5" y1="286.59999999999997" x2="93.5" y2="295.96" stroke="#777" stroke-width="1" stroke-dasharray="1.3,1.3"/>
<line x1="69.3" y1="347.68" x2="69.3" y2="352.68" stroke="#777" stroke-width="1" stroke-dasharray="1.3,1.3"/>
<line x1="69.3" y1="371.68" x2="69.3" y2="381.04" stroke="#777" stroke-width="1" stroke-dasharray="1.3,1.3"/>
<line x1="69.3" y1="400.04" x2="69.3" y2="409.40000000000003" stroke="#777" stroke-width="1" stroke-dasharray="1.3,1.3"/>
<line x1="69.3" y1="428.40000000000003" x2="69.3" y2="437.75999999999993" stroke="#777" stroke-width="1" stroke-dasharray="1.3,1.3"/>
<g transform="translate(544,199) rotate(30)">
<rect x="-8.2" y="-16.0" width="16.4" height="32.0" rx="8.2" fill="none" stroke="#ffffff" stroke-width="3.6"/>
<line x1="-8.2" y1="0" x2="8.2" y2="0" stroke="#ffffff" stroke-width="3"/>
<path d="M1.5,-11.5 Q3.8,-10.8 3.2,-7.8" fill="none" stroke="#ffffff" stroke-width="1.8"/>
</g>
<circle cx="707.3" cy="198.6" r="9.9" fill="none" stroke="#ffffff" stroke-width="3.3"/>
<line x1="707.3" y1="198.6" x2="704.1" y2="181.6" stroke="#ffffff" stroke-width="1.5"/>
<circle cx="704.1" cy="181.6" r="2.3" fill="#ffffff"/>
<line x1="707.3" y1="198.6" x2="715.6" y2="184.3" stroke="#ffffff" stroke-width="1.5"/>
<circle cx="715.6" cy="184.3" r="1.9" fill="#ffffff"/>
<line x1="707.3" y1="198.6" x2="723.4" y2="184.1" stroke="#ffffff" stroke-width="1.5"/>
<circle cx="723.4" cy="184.1" r="2.1" fill="#ffffff"/>
<line x1="707.3" y1="198.6" x2="696.5" y2="189.5" stroke="#ffffff" stroke-width="1.5"/>
<circle cx="696.5" cy="189.5" r="1.8" fill="#ffffff"/>
<line x1="707.3" y1="198.6" x2="693" y2="196.6" stroke="#ffffff" stroke-width="1.5"/>
<circle cx="693" cy="196.6" r="2.1" fill="#ffffff"/>
<line x1="707.3" y1="198.6" x2="725.1" y2="199.3" stroke="#ffffff" stroke-width="1.5"/>
<circle cx="725.1" cy="199.3" r="2.0" fill="#ffffff"/>
<line x1="707.3" y1="198.6" x2="689.8" y2="209.8" stroke="#ffffff" stroke-width="1.5"/>
<circle cx="689.8" cy="209.8" r="2.7" fill="#ffffff"/>
<line x1="707.3" y1="198.6" x2="710" y2="212" stroke="#ffffff" stroke-width="1.5"/>
<circle cx="710" cy="212" r="1.3" fill="#ffffff"/>
<line x1="707.3" y1="198.6" x2="720.7" y2="212" stroke="#ffffff" stroke-width="1.5"/>
<circle cx="720.7" cy="212" r="2.4" fill="#ffffff"/>
<line x1="707.3" y1="198.6" x2="701.9" y2="216" stroke="#ffffff" stroke-width="1.5"/>
<circle cx="701.9" cy="216" r="2.1" fill="#ffffff"/>
<circle cx="707.3" cy="198.6" r="8.2" fill="#91bce6"/>
<circle cx="707.3" cy="198.6" r="9.9" fill="none" stroke="#ffffff" stroke-width="3.3"/>
<circle cx="870.2" cy="199" r="16.6" fill="none" stroke="#ffffff" stroke-width="2.2"/>
<line x1="869.5" y1="198.4" x2="862.8" y2="191" stroke="#ffffff" stroke-width="1.4"/>
<line x1="869.5" y1="198.4" x2="879.8" y2="195.5" stroke="#ffffff" stroke-width="1.4"/>
<line x1="869.5" y1="198.4" x2="861" y2="205.3" stroke="#ffffff" stroke-width="1.4"/>
<line x1="869.5" y1="198.4" x2="875.3" y2="208" stroke="#ffffff" stroke-width="1.4"/>
<circle cx="862.8" cy="191" r="2.0" fill="#91bce6" stroke="#ffffff" stroke-width="1.4"/>
<circle cx="879.8" cy="195.5" r="2.0" fill="#91bce6" stroke="#ffffff" stroke-width="1.4"/>
<circle cx="861" cy="205.3" r="2.0" fill="#91bce6" stroke="#ffffff" stroke-width="1.4"/>
<circle cx="875.3" cy="208" r="2.0" fill="#91bce6" stroke="#ffffff" stroke-width="1.4"/>
<circle cx="869.5" cy="198.4" r="2.8" fill="#91bce6" stroke="#ffffff" stroke-width="1.6"/>
<circle cx="1033.4" cy="189.8" r="7.6" fill="none" stroke="#ffffff" stroke-width="1.6"/>
<circle cx="1033.4" cy="189.8" r="3.6" fill="none" stroke="#ffffff" stroke-width="1.5"/>
<circle cx="1024.2" cy="208.3" r="7.6" fill="none" stroke="#ffffff" stroke-width="1.6"/>
<circle cx="1024.2" cy="208.3" r="3.6" fill="none" stroke="#ffffff" stroke-width="1.5"/>
<circle cx="1042.4" cy="208.3" r="7.6" fill="none" stroke="#ffffff" stroke-width="1.6"/>
<circle cx="1042.4" cy="208.3" r="3.6" fill="none" stroke="#ffffff" stroke-width="1.5"/>
<g transform="translate(1190,198) rotate(30) scale(1.0)">
<path d="M-7.6,0 L-7.6,-9.6 A7.6,7.6 0 0 1 7.6,-9.6 L7.6,0" fill="none" stroke="#ffffff" stroke-width="3.6"/>
<path d="M-9.4,-1 L9.4,-1 L9.4,9.6 A9.4,9.4 0 0 1 -9.4,9.6 Z" fill="#ffffff"/>
</g>
<g transform="translate(1208.8,198.2) scale(1.0) translate(-1208.8,-198.2)">
<path d="M1208.8,198.79999999999998 L1215.6,204.0 L1212.7,204.0 L1212.7,211.2 L1204.8999999999999,211.2 L1204.8999999999999,204.0 L1202.0,204.0 Z" fill="none" stroke="#ffffff" stroke-width="1.3" stroke-linejoin="miter"/>
<rect x="1205.2" y="212.7" width="7.2" height="1.3" fill="#ffffff"/>
<rect x="1205.2" y="215.0" width="7.2" height="1.3" fill="#ffffff"/>
<rect x="1205.2" y="217.29999999999998" width="7.2" height="1.3" fill="#ffffff"/>
</g>
<g transform="translate(1353.3,198) rotate(30) scale(1.0)">
<path d="M-7.6,0 L-7.6,-9.6 A7.6,7.6 0 0 1 7.6,-9.6 L7.6,0" fill="none" stroke="#ffffff" stroke-width="3.6"/>
<path d="M-9.4,-1 L9.4,-1 L9.4,9.6 A9.4,9.4 0 0 1 -9.4,9.6 Z" fill="#ffffff"/>
</g>
<g transform="translate(1371.6,218.3) scale(1.0) translate(-1371.6,-218.3)">
<path d="M1371.6,217.70000000000002 L1378.3999999999999,212.5 L1375.5,212.5 L1375.5,205.3 L1367.6999999999998,205.3 L1367.6999999999998,212.5 L1364.8,212.5 Z" fill="none" stroke="#ffffff" stroke-width="1.3" stroke-linejoin="miter"/>
<rect x="1368.0" y="202.5" width="7.2" height="1.3" fill="#ffffff"/>
<rect x="1368.0" y="200.2" width="7.2" height="1.3" fill="#ffffff"/>
<rect x="1368.0" y="197.9" width="7.2" height="1.3" fill="#ffffff"/>
</g>
<ellipse cx="1522.3" cy="188" rx="14.2" ry="5.3" fill="none" stroke="#ffffff" stroke-width="2.8"/>
<path d="M1508.1,188 L1508.1,211.5 A14.2,5.3 0 0 0 1536.5,211.5 L1536.5,188" fill="none" stroke="#ffffff" stroke-width="2.8"/>
<path d="M1508.1,196.2 A14.2,5.3 0 0 0 1536.5,196.2" fill="none" stroke="#ffffff" stroke-width="2.6"/>
<path d="M1508.1,204.0 A14.2,5.3 0 0 0 1536.5,204.0" fill="none" stroke="#ffffff" stroke-width="2.6"/>
<circle cx="1531.6" cy="195.5" r="1.2" fill="#ffffff"/>
<circle cx="1531.6" cy="203.0" r="1.2" fill="#ffffff"/>
<circle cx="1531.6" cy="210.5" r="1.2" fill="#ffffff"/>
<path d="M1680,217.6 L1666.4,217.6 L1666.4,180.6 L1696.2,180.6 L1696.2,197.7" fill="none" stroke="#ffffff" stroke-width="3.1"/>
<line x1="1671" y1="189" x2="1691" y2="189" stroke="#ffffff" stroke-width="2.3"/>
<line x1="1671" y1="197.1" x2="1683" y2="197.1" stroke="#ffffff" stroke-width="2.3"/>
<line x1="1671" y1="204.6" x2="1683" y2="204.6" stroke="#ffffff" stroke-width="2.3"/>
<g transform="translate(1695.6,210.6) rotate(52)">
<path d="M-4.3,0 L-4.3,-5.2 A4.3,4.3 0 0 1 4.3,-5.2 L4.3,0" fill="none" stroke="#ffffff" stroke-width="2.6"/>
<path d="M-5.6,-0.6 L5.6,-0.6 L5.6,5.2 A5.6,5.6 0 0 1 -5.6,5.2 Z" fill="#ffffff"/>
</g>
<defs><clipPath id="dbc1846"><path d="M1826,170 L1866,170 L1866,199 L1852.3,199 L1851.5,225 L1826,225 Z"/></clipPath></defs>
<g clip-path="url(#dbc1846)">
<ellipse cx="1846" cy="185.9" rx="18" ry="6.9" fill="#ffffff"/>
<path d="M1828,187.70000000000002 A18,6.9 0 0 0 1864,187.70000000000002 L1864,194.00000000000003 A18,6.9 0 0 1 1828,194.00000000000003 Z" fill="#ffffff"/>
<path d="M1828,196.00000000000003 A18,6.9 0 0 0 1864,196.00000000000003 L1864,202.30000000000004 A18,6.9 0 0 1 1828,202.30000000000004 Z" fill="#ffffff"/>
<path d="M1828,204.30000000000004 A18,6.9 0 0 0 1864,204.30000000000004 L1864,210.60000000000005 A18,6.9 0 0 1 1828,210.60000000000005 Z" fill="#ffffff"/>
</g>
<g transform="translate(1861.9,203) scale(0.83) translate(-1861.9,-203)">
<path d="M1861.9,203.6 L1868.7,208.8 L1865.8000000000002,208.8 L1865.8000000000002,216 L1858.0,216 L1858.0,208.8 L1855.1000000000001,208.8 Z" fill="none" stroke="#ffffff" stroke-width="1.4" stroke-linejoin="miter"/>
<rect x="1858.3000000000002" y="217.5" width="7.2" height="1.3" fill="#ffffff"/>
<rect x="1858.3000000000002" y="219.8" width="7.2" height="1.3" fill="#ffffff"/>
<rect x="1858.3000000000002" y="222.1" width="7.2" height="1.3" fill="#ffffff"/>
</g>
<defs><clipPath id="dbc2008"><path d="M1988.9,170 L2028.9,170 L2028.9,199 L2015.2,199 L2014.4,225 L1988.9,225 Z"/></clipPath></defs>
<g clip-path="url(#dbc2008)">
<ellipse cx="2008.9" cy="185.9" rx="18" ry="6.9" fill="#ffffff"/>
<path d="M1990.9,187.70000000000002 A18,6.9 0 0 0 2026.9,187.70000000000002 L2026.9,194.00000000000003 A18,6.9 0 0 1 1990.9,194.00000000000003 Z" fill="#ffffff"/>
<path d="M1990.9,196.00000000000003 A18,6.9 0 0 0 2026.9,196.00000000000003 L2026.9,202.30000000000004 A18,6.9 0 0 1 1990.9,202.30000000000004 Z" fill="#ffffff"/>
<path d="M1990.9,204.30000000000004 A18,6.9 0 0 0 2026.9,204.30000000000004 L2026.9,210.60000000000005 A18,6.9 0 0 1 1990.9,210.60000000000005 Z" fill="#ffffff"/>
</g>
<g transform="translate(2024.5,219.6) scale(0.83) translate(-2024.5,-219.6)">
<path d="M2024.5,219.0 L2031.3,213.79999999999998 L2028.4,213.79999999999998 L2028.4,206.6 L2020.6,206.6 L2020.6,213.79999999999998 L2017.7,213.79999999999998 Z" fill="none" stroke="#ffffff" stroke-width="1.4" stroke-linejoin="miter"/>
<rect x="2020.9" y="203.79999999999998" width="7.2" height="1.3" fill="#ffffff"/>
<rect x="2020.9" y="201.49999999999997" width="7.2" height="1.3" fill="#ffffff"/>
<rect x="2020.9" y="199.2" width="7.2" height="1.3" fill="#ffffff"/>
</g>
<path d="M2173.5,208.4 L2157.6,208.4 L2157.6,183.9 L2186.5,183.9 L2186.5,195.5" fill="none" stroke="#ffffff" stroke-width="2.8"/>
<line x1="2157" y1="214.5" x2="2184.7" y2="214.5" stroke="#ffffff" stroke-width="2.4" stroke-linecap="round"/>
<polyline points="2162.4,199 2170.4,193.7 2173.1,196.8 2181.1,190.6" fill="none" stroke="#ffffff" stroke-width="2"/>
<circle cx="2182.5" cy="204.9" r="5.8" fill="none" stroke="#ffffff" stroke-width="2.2"/>
<line x1="2186.8" y1="209.4" x2="2191" y2="214" stroke="#ffffff" stroke-width="2.4" stroke-linecap="round"/>
<path d="M2335.6,214.7 L2323.8,214.7 Q2321.9,214.7 2321.9,212.8 L2321.9,185.7 Q2321.9,183.8 2323.8,183.8 L2348.3,183.8 Q2350.3,183.8 2350.3,185.7 L2350.3,197.5" fill="none" stroke="#ffffff" stroke-width="3"/>
<line x1="2325.5" y1="190.3" x2="2346.8" y2="190.3" stroke="#ffffff" stroke-width="2.1" stroke-linecap="round"/>
<line x1="2325.5" y1="195.4" x2="2346.8" y2="195.4" stroke="#ffffff" stroke-width="2.1" stroke-linecap="round"/>
<line x1="2325.5" y1="200.5" x2="2333.5" y2="200.5" stroke="#ffffff" stroke-width="2.1" stroke-linecap="round"/>
<circle cx="2344.7" cy="207.1" r="6.4" fill="none" stroke="#ffffff" stroke-width="2.3"/>
<line x1="2349.6" y1="212.4" x2="2353.6" y2="216.3" stroke="#ffffff" stroke-width="2.3" stroke-linecap="round"/>
<g transform="translate(1679.2,352.3) rotate(30) scale(1.0)">
<path d="M-7.6,0 L-7.6,-9.6 A7.6,7.6 0 0 1 7.6,-9.6 L7.6,0" fill="none" stroke="#e8532f" stroke-width="3.6"/>
<path d="M-9.4,-1 L9.4,-1 L9.4,9.6 A9.4,9.4 0 0 1 -9.4,9.6 Z" fill="#e8532f"/>
</g>
<g transform="translate(1697.8,352.5) scale(1.0) translate(-1697.8,-352.5)">
<path d="M1697.8,353.1 L1704.6,358.3 L1701.7,358.3 L1701.7,365.5 L1693.8999999999999,365.5 L1693.8999999999999,358.3 L1691.0,358.3 Z" fill="none" stroke="#e8532f" stroke-width="1.3" stroke-linejoin="miter"/>
<rect x="1694.2" y="367.0" width="7.2" height="1.3" fill="#e8532f"/>
<rect x="1694.2" y="369.3" width="7.2" height="1.3" fill="#e8532f"/>
<rect x="1694.2" y="371.6" width="7.2" height="1.3" fill="#e8532f"/>
</g>
<g fill="none" stroke="#f7bd3f" stroke-width="1.45" stroke-linejoin="round" stroke-linecap="round">
<polygon points="2171.05,332.35 2189.40,340.70 2189.40,361.10 2171.05,370.40 2152.70,361.10 2152.70,340.70"/>
<polyline points="2153.35,342.70 2171.05,350.05 2171.05,370.40"/>
<polyline points="2157.70,349.40 2165.40,353.40"/>
<polyline points="2171.40,347.70 2160.70,342.00 2171.05,336.70 2184.75,343.70 2184.75,359.10 2174.70,363.75 2173.40,348.40 2171.05,350.05"/>
<polyline points="2169.70,342.70 2172.70,340.70 2182.75,345.40 2182.75,356.70 2176.40,355.40 2180.40,347.70"/>
<polyline points="2184.75,343.70 2189.40,340.70"/>
<polyline points="2186.50,343.10 2186.50,359.90"/>
</g>
<circle cx="2337.5" cy="353.5" r="18.7" fill="none" stroke="#4a93d6" stroke-width="2.7"/>
<circle cx="2340.6" cy="344.3" r="2.2" fill="#4a93d6"/>
<path transform="translate(0.0,0.0)" d="M2331.8,352.9 Q2335.8,348.9 2340.6,347.9 L2335.9,361.2 Q2336.0,362.3 2337.2,361.6 L2340.2,359.4 Q2337.4,363.4 2334.6,364.5 Q2332.3,365.2 2332.8,362.6 L2336.9,350.9 Q2334.6,351.3 2331.8,352.9 Z" fill="#4a93d6"/>
<g transform="translate(1679.2,446.75) rotate(30) scale(1.0)">
<path d="M-7.6,0 L-7.6,-9.6 A7.6,7.6 0 0 1 7.6,-9.6 L7.6,0" fill="none" stroke="#4e9de1" stroke-width="3.6"/>
<path d="M-9.4,-1 L9.4,-1 L9.4,9.6 A9.4,9.4 0 0 1 -9.4,9.6 Z" fill="#4e9de1"/>
</g>
<g transform="translate(1697.8,466.95) scale(1.0) translate(-1697.8,-466.95)">
<path d="M1697.8,466.34999999999997 L1704.6,461.15 L1701.7,461.15 L1701.7,453.95 L1693.8999999999999,453.95 L1693.8999999999999,461.15 L1691.0,461.15 Z" fill="none" stroke="#4e9de1" stroke-width="1.3" stroke-linejoin="miter"/>
<rect x="1694.2" y="451.15" width="7.2" height="1.3" fill="#4e9de1"/>
<rect x="1694.2" y="448.84999999999997" width="7.2" height="1.3" fill="#4e9de1"/>
<rect x="1694.2" y="446.54999999999995" width="7.2" height="1.3" fill="#4e9de1"/>
</g>
<g fill="none" stroke="#f7bd3f" stroke-width="1.45" stroke-linejoin="round" stroke-linecap="round">
<polygon points="2171.05,426.80 2189.40,435.15 2189.40,455.55 2171.05,464.85 2152.70,455.55 2152.70,435.15"/>
<polyline points="2153.35,437.15 2171.05,444.50 2171.05,464.85"/>
<polyline points="2157.70,443.85 2165.40,447.85"/>
<polyline points="2171.40,442.15 2160.70,436.45 2171.05,431.15 2184.75,438.15 2184.75,453.55 2174.70,458.20 2173.40,442.85 2171.05,444.50"/>
<polyline points="2169.70,437.15 2172.70,435.15 2182.75,439.85 2182.75,451.15 2176.40,449.85 2180.40,442.15"/>
<polyline points="2184.75,438.15 2189.40,435.15"/>
<polyline points="2186.50,437.55 2186.50,454.35"/>
</g>
<circle cx="2337.5" cy="447.95" r="18.7" fill="none" stroke="#4a93d6" stroke-width="2.7"/>
<circle cx="2340.6" cy="438.75" r="2.2" fill="#4a93d6"/>
<path transform="translate(0.0,94.44999999999999)" d="M2331.8,352.9 Q2335.8,348.9 2340.6,347.9 L2335.9,361.2 Q2336.0,362.3 2337.2,361.6 L2340.2,359.4 Q2337.4,363.4 2334.6,364.5 Q2332.3,365.2 2332.8,362.6 L2336.9,350.9 Q2334.6,351.3 2331.8,352.9 Z" fill="#4a93d6"/>
<g transform="translate(1679.2,541.2) rotate(30) scale(1.0)">
<path d="M-7.6,0 L-7.6,-9.6 A7.6,7.6 0 0 1 7.6,-9.6 L7.6,0" fill="none" stroke="#4e9de1" stroke-width="3.6"/>
<path d="M-9.4,-1 L9.4,-1 L9.4,9.6 A9.4,9.4 0 0 1 -9.4,9.6 Z" fill="#4e9de1"/>
</g>
<g transform="translate(1697.8,561.4000000000001) scale(1.0) translate(-1697.8,-561.4000000000001)">
<path d="M1697.8,560.8000000000001 L1704.6,555.6000000000001 L1701.7,555.6000000000001 L1701.7,548.4000000000001 L1693.8999999999999,548.4000000000001 L1693.8999999999999,555.6000000000001 L1691.0,555.6000000000001 Z" fill="none" stroke="#4e9de1" stroke-width="1.3" stroke-linejoin="miter"/>
<rect x="1694.2" y="545.6000000000001" width="7.2" height="1.3" fill="#4e9de1"/>
<rect x="1694.2" y="543.3000000000002" width="7.2" height="1.3" fill="#4e9de1"/>
<rect x="1694.2" y="541.0000000000001" width="7.2" height="1.3" fill="#4e9de1"/>
</g>
<g fill="none" stroke="#f7bd3f" stroke-width="1.45" stroke-linejoin="round" stroke-linecap="round">
<polygon points="2171.05,521.25 2189.40,529.60 2189.40,550.00 2171.05,559.30 2152.70,550.00 2152.70,529.60"/>
<polyline points="2153.35,531.60 2171.05,538.95 2171.05,559.30"/>
<polyline points="2157.70,538.30 2165.40,542.30"/>
<polyline points="2171.40,536.60 2160.70,530.90 2171.05,525.60 2184.75,532.60 2184.75,548.00 2174.70,552.65 2173.40,537.30 2171.05,538.95"/>
<polyline points="2169.70,531.60 2172.70,529.60 2182.75,534.30 2182.75,545.60 2176.40,544.30 2180.40,536.60"/>
<polyline points="2184.75,532.60 2189.40,529.60"/>
<polyline points="2186.50,532.00 2186.50,548.80"/>
</g>
<circle cx="2337.5" cy="542.4" r="18.7" fill="none" stroke="#4a93d6" stroke-width="2.7"/>
<circle cx="2340.6" cy="533.1999999999999" r="2.2" fill="#4a93d6"/>
<path transform="translate(0.0,188.89999999999998)" d="M2331.8,352.9 Q2335.8,348.9 2340.6,347.9 L2335.9,361.2 Q2336.0,362.3 2337.2,361.6 L2340.2,359.4 Q2337.4,363.4 2334.6,364.5 Q2332.3,365.2 2332.8,362.6 L2336.9,350.9 Q2334.6,351.3 2331.8,352.9 Z" fill="#4a93d6"/>
<g transform="translate(1679.2,635.6500000000001) rotate(30) scale(1.0)">
<path d="M-7.6,0 L-7.6,-9.6 A7.6,7.6 0 0 1 7.6,-9.6 L7.6,0" fill="none" stroke="#4e9de1" stroke-width="3.6"/>
<path d="M-9.4,-1 L9.4,-1 L9.4,9.6 A9.4,9.4 0 0 1 -9.4,9.6 Z" fill="#4e9de1"/>
</g>
<g transform="translate(1697.8,655.8500000000001) scale(1.0) translate(-1697.8,-655.8500000000001)">
<path d="M1697.8,655.2500000000001 L1704.6,650.0500000000002 L1701.7,650.0500000000002 L1701.7,642.8500000000001 L1693.8999999999999,642.8500000000001 L1693.8999999999999,650.0500000000002 L1691.0,650.0500000000002 Z" fill="none" stroke="#4e9de1" stroke-width="1.3" stroke-linejoin="miter"/>
<rect x="1694.2" y="640.0500000000002" width="7.2" height="1.3" fill="#4e9de1"/>
<rect x="1694.2" y="637.7500000000002" width="7.2" height="1.3" fill="#4e9de1"/>
<rect x="1694.2" y="635.4500000000002" width="7.2" height="1.3" fill="#4e9de1"/>
</g>
<g fill="none" stroke="#f7bd3f" stroke-width="1.45" stroke-linejoin="round" stroke-linecap="round">
<polygon points="2171.05,615.70 2189.40,624.05 2189.40,644.45 2171.05,653.75 2152.70,644.45 2152.70,624.05"/>
<polyline points="2153.35,626.05 2171.05,633.40 2171.05,653.75"/>
<polyline points="2157.70,632.75 2165.40,636.75"/>
<polyline points="2171.40,631.05 2160.70,625.35 2171.05,620.05 2184.75,627.05 2184.75,642.45 2174.70,647.10 2173.40,631.75 2171.05,633.40"/>
<polyline points="2169.70,626.05 2172.70,624.05 2182.75,628.75 2182.75,640.05 2176.40,638.75 2180.40,631.05"/>
<polyline points="2184.75,627.05 2189.40,624.05"/>
<polyline points="2186.50,626.45 2186.50,643.25"/>
</g>
<circle cx="2337.5" cy="636.85" r="18.7" fill="none" stroke="#4a93d6" stroke-width="2.7"/>
<circle cx="2340.6" cy="627.65" r="2.2" fill="#4a93d6"/>
<path transform="translate(0.0,283.35)" d="M2331.8,352.9 Q2335.8,348.9 2340.6,347.9 L2335.9,361.2 Q2336.0,362.3 2337.2,361.6 L2340.2,359.4 Q2337.4,363.4 2334.6,364.5 Q2332.3,365.2 2332.8,362.6 L2336.9,350.9 Q2334.6,351.3 2331.8,352.9 Z" fill="#4a93d6"/>
<g transform="translate(1679.2,730.1) rotate(30) scale(1.0)">
<path d="M-7.6,0 L-7.6,-9.6 A7.6,7.6 0 0 1 7.6,-9.6 L7.6,0" fill="none" stroke="#4e9de1" stroke-width="3.6"/>
<path d="M-9.4,-1 L9.4,-1 L9.4,9.6 A9.4,9.4 0 0 1 -9.4,9.6 Z" fill="#4e9de1"/>
</g>
<g transform="translate(1697.8,750.3000000000001) scale(1.0) translate(-1697.8,-750.3000000000001)">
<path d="M1697.8,749.7 L1704.6,744.5000000000001 L1701.7,744.5000000000001 L1701.7,737.3000000000001 L1693.8999999999999,737.3000000000001 L1693.8999999999999,744.5000000000001 L1691.0,744.5000000000001 Z" fill="none" stroke="#4e9de1" stroke-width="1.3" stroke-linejoin="miter"/>
<rect x="1694.2" y="734.5000000000001" width="7.2" height="1.3" fill="#4e9de1"/>
<rect x="1694.2" y="732.2000000000002" width="7.2" height="1.3" fill="#4e9de1"/>
<rect x="1694.2" y="729.9000000000001" width="7.2" height="1.3" fill="#4e9de1"/>
</g>
<g fill="none" stroke="#f7bd3f" stroke-width="1.45" stroke-linejoin="round" stroke-linecap="round">
<polygon points="2171.05,710.15 2189.40,718.50 2189.40,738.90 2171.05,748.20 2152.70,738.90 2152.70,718.50"/>
<polyline points="2153.35,720.50 2171.05,727.85 2171.05,748.20"/>
<polyline points="2157.70,727.20 2165.40,731.20"/>
<polyline points="2171.40,725.50 2160.70,719.80 2171.05,714.50 2184.75,721.50 2184.75,736.90 2174.70,741.55 2173.40,726.20 2171.05,727.85"/>
<polyline points="2169.70,720.50 2172.70,718.50 2182.75,723.20 2182.75,734.50 2176.40,733.20 2180.40,725.50"/>
<polyline points="2184.75,721.50 2189.40,718.50"/>
<polyline points="2186.50,720.90 2186.50,737.70"/>
</g>
<circle cx="2337.5" cy="731.3" r="18.7" fill="none" stroke="#4a93d6" stroke-width="2.7"/>
<circle cx="2340.6" cy="722.0999999999999" r="2.2" fill="#4a93d6"/>
<path transform="translate(0.0,377.79999999999995)" d="M2331.8,352.9 Q2335.8,348.9 2340.6,347.9 L2335.9,361.2 Q2336.0,362.3 2337.2,361.6 L2340.2,359.4 Q2337.4,363.4 2334.6,364.5 Q2332.3,365.2 2332.8,362.6 L2336.9,350.9 Q2334.6,351.3 2331.8,352.9 Z" fill="#4a93d6"/>
<g transform="translate(1679.2,824.55) rotate(30) scale(1.0)">
<path d="M-7.6,0 L-7.6,-9.6 A7.6,7.6 0 0 1 7.6,-9.6 L7.6,0" fill="none" stroke="#4e9de1" stroke-width="3.6"/>
<path d="M-9.4,-1 L9.4,-1 L9.4,9.6 A9.4,9.4 0 0 1 -9.4,9.6 Z" fill="#4e9de1"/>
</g>
<g transform="translate(1697.8,844.75) scale(1.0) translate(-1697.8,-844.75)">
<path d="M1697.8,844.15 L1704.6,838.95 L1701.7,838.95 L1701.7,831.75 L1693.8999999999999,831.75 L1693.8999999999999,838.95 L1691.0,838.95 Z" fill="none" stroke="#4e9de1" stroke-width="1.3" stroke-linejoin="miter"/>
<rect x="1694.2" y="828.95" width="7.2" height="1.3" fill="#4e9de1"/>
<rect x="1694.2" y="826.6500000000001" width="7.2" height="1.3" fill="#4e9de1"/>
<rect x="1694.2" y="824.35" width="7.2" height="1.3" fill="#4e9de1"/>
</g>
<g fill="none" stroke="#f7bd3f" stroke-width="1.45" stroke-linejoin="round" stroke-linecap="round">
<polygon points="2171.05,804.60 2189.40,812.95 2189.40,833.35 2171.05,842.65 2152.70,833.35 2152.70,812.95"/>
<polyline points="2153.35,814.95 2171.05,822.30 2171.05,842.65"/>
<polyline points="2157.70,821.65 2165.40,825.65"/>
<polyline points="2171.40,819.95 2160.70,814.25 2171.05,808.95 2184.75,815.95 2184.75,831.35 2174.70,836.00 2173.40,820.65 2171.05,822.30"/>
<polyline points="2169.70,814.95 2172.70,812.95 2182.75,817.65 2182.75,828.95 2176.40,827.65 2180.40,819.95"/>
<polyline points="2184.75,815.95 2189.40,812.95"/>
<polyline points="2186.50,815.35 2186.50,832.15"/>
</g>
<circle cx="2337.5" cy="825.75" r="18.7" fill="none" stroke="#4a93d6" stroke-width="2.7"/>
<circle cx="2340.6" cy="816.55" r="2.2" fill="#4a93d6"/>
<path transform="translate(0.0,472.25)" d="M2331.8,352.9 Q2335.8,348.9 2340.6,347.9 L2335.9,361.2 Q2336.0,362.3 2337.2,361.6 L2340.2,359.4 Q2337.4,363.4 2334.6,364.5 Q2332.3,365.2 2332.8,362.6 L2336.9,350.9 Q2334.6,351.3 2331.8,352.9 Z" fill="#4a93d6"/>
<g transform="translate(1679.2,919.0) rotate(30) scale(1.0)">
<path d="M-7.6,0 L-7.6,-9.6 A7.6,7.6 0 0 1 7.6,-9.6 L7.6,0" fill="none" stroke="#e8532f" stroke-width="3.6"/>
<path d="M-9.4,-1 L9.4,-1 L9.4,9.6 A9.4,9.4 0 0 1 -9.4,9.6 Z" fill="#e8532f"/>
</g>
<g transform="translate(1697.8,919.2) scale(1.0) translate(-1697.8,-919.2)">
<path d="M1697.8,919.8000000000001 L1704.6,925.0 L1701.7,925.0 L1701.7,932.2 L1693.8999999999999,932.2 L1693.8999999999999,925.0 L1691.0,925.0 Z" fill="none" stroke="#e8532f" stroke-width="1.3" stroke-linejoin="miter"/>
<rect x="1694.2" y="933.7" width="7.2" height="1.3" fill="#e8532f"/>
<rect x="1694.2" y="936.0" width="7.2" height="1.3" fill="#e8532f"/>
<rect x="1694.2" y="938.3000000000001" width="7.2" height="1.3" fill="#e8532f"/>
</g>
<g fill="none" stroke="#f7bd3f" stroke-width="1.45" stroke-linejoin="round" stroke-linecap="round">
<polygon points="2171.05,899.05 2189.40,907.40 2189.40,927.80 2171.05,937.10 2152.70,927.80 2152.70,907.40"/>
<polyline points="2153.35,909.40 2171.05,916.75 2171.05,937.10"/>
<polyline points="2157.70,916.10 2165.40,920.10"/>
<polyline points="2171.40,914.40 2160.70,908.70 2171.05,903.40 2184.75,910.40 2184.75,925.80 2174.70,930.45 2173.40,915.10 2171.05,916.75"/>
<polyline points="2169.70,909.40 2172.70,907.40 2182.75,912.10 2182.75,923.40 2176.40,922.10 2180.40,914.40"/>
<polyline points="2184.75,910.40 2189.40,907.40"/>
<polyline points="2186.50,909.80 2186.50,926.60"/>
</g>
<circle cx="2337.5" cy="920.2" r="18.7" fill="none" stroke="#4a93d6" stroke-width="2.7"/>
<circle cx="2340.6" cy="911.0" r="2.2" fill="#4a93d6"/>
<path transform="translate(0.0,566.7)" d="M2331.8,352.9 Q2335.8,348.9 2340.6,347.9 L2335.9,361.2 Q2336.0,362.3 2337.2,361.6 L2340.2,359.4 Q2337.4,363.4 2334.6,364.5 Q2332.3,365.2 2332.8,362.6 L2336.9,350.9 Q2334.6,351.3 2331.8,352.9 Z" fill="#4a93d6"/>
<g transform="translate(1679.2,1013.45) rotate(30) scale(1.0)">
<path d="M-7.6,0 L-7.6,-9.6 A7.6,7.6 0 0 1 7.6,-9.6 L7.6,0" fill="none" stroke="#e8532f" stroke-width="3.6"/>
<path d="M-9.4,-1 L9.4,-1 L9.4,9.6 A9.4,9.4 0 0 1 -9.4,9.6 Z" fill="#e8532f"/>
</g>
<g transform="translate(1697.8,1013.6500000000001) scale(1.0) translate(-1697.8,-1013.6500000000001)">
<path d="M1697.8,1014.2500000000001 L1704.6,1019.45 L1701.7,1019.45 L1701.7,1026.65 L1693.8999999999999,1026.65 L1693.8999999999999,1019.45 L1691.0,1019.45 Z" fill="none" stroke="#e8532f" stroke-width="1.3" stroke-linejoin="miter"/>
<rect x="1694.2" y="1028.15" width="7.2" height="1.3" fill="#e8532f"/>
<rect x="1694.2" y="1030.45" width="7.2" height="1.3" fill="#e8532f"/>
<rect x="1694.2" y="1032.75" width="7.2" height="1.3" fill="#e8532f"/>
</g>
<g fill="none" stroke="#f7bd3f" stroke-width="1.45" stroke-linejoin="round" stroke-linecap="round">
<polygon points="2171.05,993.50 2189.40,1001.85 2189.40,1022.25 2171.05,1031.55 2152.70,1022.25 2152.70,1001.85"/>
<polyline points="2153.35,1003.85 2171.05,1011.20 2171.05,1031.55"/>
<polyline points="2157.70,1010.55 2165.40,1014.55"/>
<polyline points="2171.40,1008.85 2160.70,1003.15 2171.05,997.85 2184.75,1004.85 2184.75,1020.25 2174.70,1024.90 2173.40,1009.55 2171.05,1011.20"/>
<polyline points="2169.70,1003.85 2172.70,1001.85 2182.75,1006.55 2182.75,1017.85 2176.40,1016.55 2180.40,1008.85"/>
<polyline points="2184.75,1004.85 2189.40,1001.85"/>
<polyline points="2186.50,1004.25 2186.50,1021.05"/>
</g>
<circle cx="2337.5" cy="1014.65" r="18.7" fill="none" stroke="#4a93d6" stroke-width="2.7"/>
<circle cx="2340.6" cy="1005.4499999999999" r="2.2" fill="#4a93d6"/>
<path transform="translate(0.0,661.15)" d="M2331.8,352.9 Q2335.8,348.9 2340.6,347.9 L2335.9,361.2 Q2336.0,362.3 2337.2,361.6 L2340.2,359.4 Q2337.4,363.4 2334.6,364.5 Q2332.3,365.2 2332.8,362.6 L2336.9,350.9 Q2334.6,351.3 2331.8,352.9 Z" fill="#4a93d6"/>
<g transform="translate(1679.2,1107.9) rotate(30) scale(1.0)">
<path d="M-7.6,0 L-7.6,-9.6 A7.6,7.6 0 0 1 7.6,-9.6 L7.6,0" fill="none" stroke="#e8532f" stroke-width="3.6"/>
<path d="M-9.4,-1 L9.4,-1 L9.4,9.6 A9.4,9.4 0 0 1 -9.4,9.6 Z" fill="#e8532f"/>
</g>
<g transform="translate(1697.8,1108.1000000000001) scale(1.0) translate(-1697.8,-1108.1000000000001)">
<path d="M1697.8,1108.7 L1704.6,1113.9 L1701.7,1113.9 L1701.7,1121.1000000000001 L1693.8999999999999,1121.1000000000001 L1693.8999999999999,1113.9 L1691.0,1113.9 Z" fill="none" stroke="#e8532f" stroke-width="1.3" stroke-linejoin="miter"/>
<rect x="1694.2" y="1122.6000000000001" width="7.2" height="1.3" fill="#e8532f"/>
<rect x="1694.2" y="1124.9" width="7.2" height="1.3" fill="#e8532f"/>
<rect x="1694.2" y="1127.2" width="7.2" height="1.3" fill="#e8532f"/>
</g>
<g fill="none" stroke="#f7bd3f" stroke-width="1.45" stroke-linejoin="round" stroke-linecap="round">
<polygon points="2171.05,1087.95 2189.40,1096.30 2189.40,1116.70 2171.05,1126.00 2152.70,1116.70 2152.70,1096.30"/>
<polyline points="2153.35,1098.30 2171.05,1105.65 2171.05,1126.00"/>
<polyline points="2157.70,1105.00 2165.40,1109.00"/>
<polyline points="2171.40,1103.30 2160.70,1097.60 2171.05,1092.30 2184.75,1099.30 2184.75,1114.70 2174.70,1119.35 2173.40,1104.00 2171.05,1105.65"/>
<polyline points="2169.70,1098.30 2172.70,1096.30 2182.75,1101.00 2182.75,1112.30 2176.40,1111.00 2180.40,1103.30"/>
<polyline points="2184.75,1099.30 2189.40,1096.30"/>
<polyline points="2186.50,1098.70 2186.50,1115.50"/>
</g>
<circle cx="2337.5" cy="1109.1" r="18.7" fill="none" stroke="#4a93d6" stroke-width="2.7"/>
<circle cx="2340.6" cy="1099.8999999999999" r="2.2" fill="#4a93d6"/>
<path transform="translate(0.0,755.5999999999999)" d="M2331.8,352.9 Q2335.8,348.9 2340.6,347.9 L2335.9,361.2 Q2336.0,362.3 2337.2,361.6 L2340.2,359.4 Q2337.4,363.4 2334.6,364.5 Q2332.3,365.2 2332.8,362.6 L2336.9,350.9 Q2334.6,351.3 2331.8,352.9 Z" fill="#4a93d6"/>
<g transform="translate(1679.2,1202.3500000000001) rotate(30) scale(1.0)">
<path d="M-7.6,0 L-7.6,-9.6 A7.6,7.6 0 0 1 7.6,-9.6 L7.6,0" fill="none" stroke="#4e9de1" stroke-width="3.6"/>
<path d="M-9.4,-1 L9.4,-1 L9.4,9.6 A9.4,9.4 0 0 1 -9.4,9.6 Z" fill="#4e9de1"/>
</g>
<g transform="translate(1697.8,1222.5500000000002) scale(1.0) translate(-1697.8,-1222.5500000000002)">
<path d="M1697.8,1221.9500000000003 L1704.6,1216.7500000000002 L1701.7,1216.7500000000002 L1701.7,1209.5500000000002 L1693.8999999999999,1209.5500000000002 L1693.8999999999999,1216.7500000000002 L1691.0,1216.7500000000002 Z" fill="none" stroke="#4e9de1" stroke-width="1.3" stroke-linejoin="miter"/>
<rect x="1694.2" y="1206.7500000000002" width="7.2" height="1.3" fill="#4e9de1"/>
<rect x="1694.2" y="1204.4500000000003" width="7.2" height="1.3" fill="#4e9de1"/>
<rect x="1694.2" y="1202.1500000000003" width="7.2" height="1.3" fill="#4e9de1"/>
</g>
<g fill="none" stroke="#f7bd3f" stroke-width="1.45" stroke-linejoin="round" stroke-linecap="round">
<polygon points="2171.05,1182.40 2189.40,1190.75 2189.40,1211.15 2171.05,1220.45 2152.70,1211.15 2152.70,1190.75"/>
<polyline points="2153.35,1192.75 2171.05,1200.10 2171.05,1220.45"/>
<polyline points="2157.70,1199.45 2165.40,1203.45"/>
<polyline points="2171.40,1197.75 2160.70,1192.05 2171.05,1186.75 2184.75,1193.75 2184.75,1209.15 2174.70,1213.80 2173.40,1198.45 2171.05,1200.10"/>
<polyline points="2169.70,1192.75 2172.70,1190.75 2182.75,1195.45 2182.75,1206.75 2176.40,1205.45 2180.40,1197.75"/>
<polyline points="2184.75,1193.75 2189.40,1190.75"/>
<polyline points="2186.50,1193.15 2186.50,1209.95"/>
</g>
<circle cx="2337.5" cy="1203.5500000000002" r="18.7" fill="none" stroke="#4a93d6" stroke-width="2.7"/>
<circle cx="2340.6" cy="1194.3500000000001" r="2.2" fill="#4a93d6"/>
<path transform="translate(0.0,850.0500000000002)" d="M2331.8,352.9 Q2335.8,348.9 2340.6,347.9 L2335.9,361.2 Q2336.0,362.3 2337.2,361.6 L2340.2,359.4 Q2337.4,363.4 2334.6,364.5 Q2332.3,365.2 2332.8,362.6 L2336.9,350.9 Q2334.6,351.3 2331.8,352.9 Z" fill="#4a93d6"/>
</svg>
</body></html>
